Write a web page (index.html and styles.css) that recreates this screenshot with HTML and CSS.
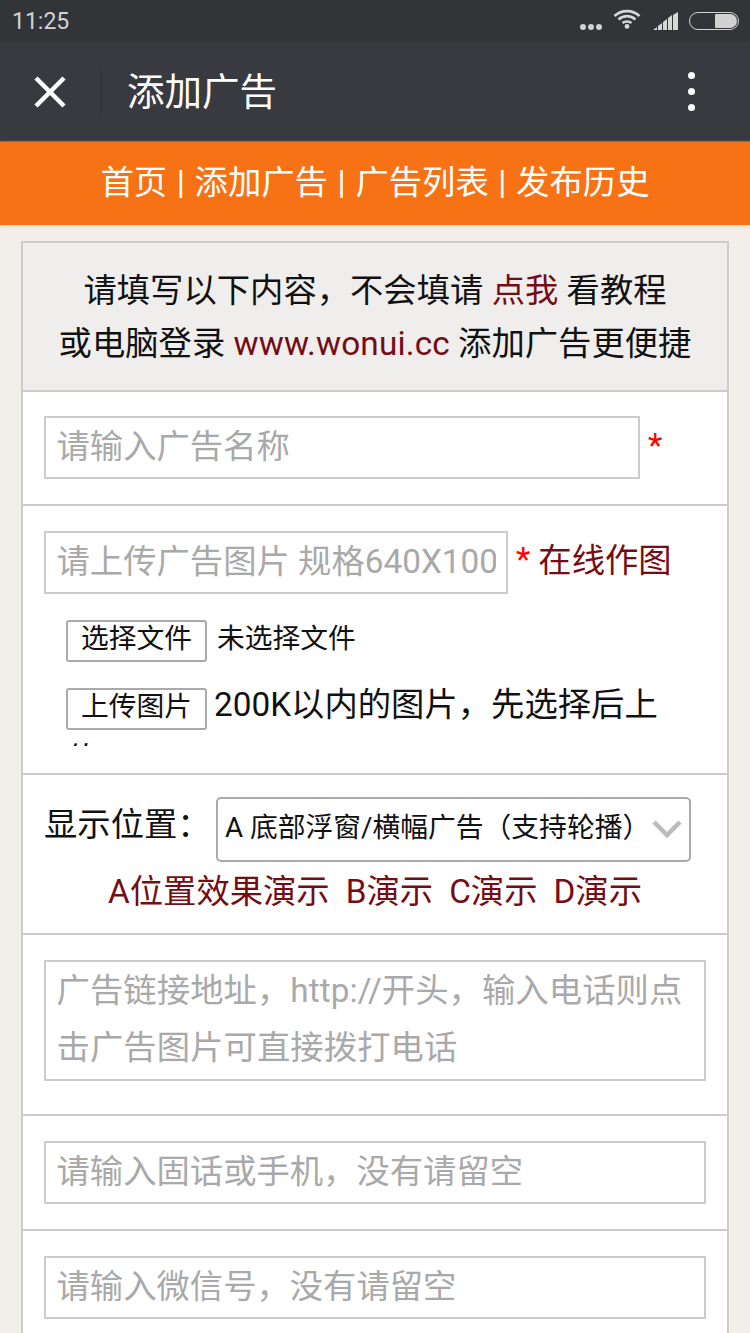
FILE: index.html
```html
<!DOCTYPE html>
<html lang="zh">
<head>
<meta charset="utf-8">
<title>添加广告</title>
<link rel="stylesheet" href="styles.css">
</head>
<body>
<div class="status">
  <span class="time">11:25</span>
  <span class="status-icons">
    <svg class="dots" width="24" height="8" viewBox="0 0 24 8"><circle cx="4" cy="4" r="3"/><circle cx="12" cy="4" r="3"/><circle cx="20" cy="4" r="3"/></svg>
    <svg class="wifi" width="28" height="20" viewBox="0 0 28 20"><path d="M1.500 7C8.500 .5 19.500 .5 26.500 7M5.500 10.500C10.500 6 17.500 6 22.500 10.500M9.500 14C12 12 16 12 18.500 14" fill="none" stroke="#d6d6d6" stroke-width="2.600"/><circle cx="14" cy="17.400" r="2.400" fill="#d6d6d6"/></svg>
    <svg class="signal" width="26" height="18" viewBox="0 0 26 18"><path d="M0 18l4-3v3zM5 18v-4l4-3v7zM10 18V10l4-3v11zM15 18V6l4-3v15zM20 18V3l5-3v18z" fill="#d6d6d6"/></svg>
    <span class="battery"><span class="battery-fill"></span></span>
  </span>
</div>
<header class="bar">
  <svg class="close" width="34" height="34" viewBox="0 0 34 34"><path d="M3 3l28 28M31 3L3 31" stroke="#fff" stroke-width="4.500" fill="none"/></svg>
  <span class="bar-rule"></span>
  <h1 class="bar-title">添加广告</h1>
  <span class="more"><i></i><i></i><i></i></span>
</header>
<nav class="nav">首页 | 添加广告 | 广告列表 | 发布历史</nav>
<main class="card">
  <div class="intro">
    <p>请填写以下内容，不会填请 <a class="link">点我</a> 看教程</p>
    <p>或电脑登录 <a class="link site">www.wonui.cc</a> 添加广告更便捷</p>
  </div>
  <section class="row row-name">
    <input class="field field-name" placeholder="请输入广告名称">
    <span class="star">*</span>
  </section>
  <section class="row row-image">
    <div class="image-line">
      <input class="field field-image" placeholder="请上传广告图片 规格640X100">
      <span class="star">*</span>
      <a class="link online">在线作图</a>
    </div>
    <div class="file-line">
      <button class="btn">选择文件</button><span class="file-none">未选择文件</span>
    </div>
    <div class="upload-line">
      <button class="btn">上传图片</button>200K以内的图片，先选择后上传
    </div>
  </section>
  <section class="row row-pos">
    <div class="pos-line">
      <label class="pos-label">显示位置：</label>
      <span class="select-wrap">
        <select class="select"><option>A 底部浮窗/横幅广告（支持轮播）</option></select>
        <svg class="chev" width="30" height="20" viewBox="0 0 30 20"><path d="M2 3l13 13L28 3" fill="none" stroke="#bbb" stroke-width="4.500"/></svg>
      </span>
    </div>
    <div class="demos"><a class="link">A位置效果演示</a><a class="link">B演示</a><a class="link">C演示</a><a class="link">D演示</a></div>
  </section>
  <section class="row row-url">
    <textarea class="field area" placeholder="广告链接地址，http://开头，输入电话则点击广告图片可直接拨打电话"></textarea>
  </section>
  <section class="row">
    <input class="field field-wide" placeholder="请输入固话或手机，没有请留空">
  </section>
  <section class="row">
    <input class="field field-wide" placeholder="请输入微信号，没有请留空">
  </section>
</main>
</body>
</html>
```
FILE: styles.css
```css
* { box-sizing: border-box; }
html, body { margin: 0; padding: 0; height: 1333px; overflow: hidden; }
body {
  background: #f2eee8;
  font-family: Roboto, "Noto Sans CJK SC", sans-serif;
  font-size: 33.33px;
  color: #111;
}
.status {
  height: 42px;
  background: #333438;
  display: flex;
  align-items: center;
  justify-content: space-between;
  padding: 0 11px 0 12px;
  color: #d2d2d2;
}
.time { font-size: 23px; }
.status-icons { display: flex; align-items: center; }
.dots { fill: #d2d2d2; margin: 12px 10px 0 0; }
.wifi { margin: -4px 12px 0 0; }
.signal { margin: 0 10px 0 0; }
.battery {
  width: 50px;
  height: 18px;
  border: 1.5px solid #d2d2d2;
  border-radius: 9px;
  display: flex;
  justify-content: flex-end;
  padding: 1px;
}
.battery-fill { width: 22px; background: #d2d2d2; border-radius: 1px 7px 7px 1px; }
.bar {
  height: 99px;
  background: #393a3f;
  display: flex;
  align-items: center;
  padding: 0 0 0 33px;
  color: #fff;
}
.bar-rule { width: 1px; height: 50px; background: #2f3034; margin: 0 26px 0 33px; }
.bar-title { margin: 0; font-size: 37.5px; font-weight: 400; flex: 1; line-height: 1; padding-top: 2px; }
.more { display: flex; flex-direction: column; gap: 9px; margin-right: 55px; }
.more i { width: 7px; height: 7px; border-radius: 50%; background: #fff; }
.nav {
  height: 84px;
  background: #f77214;
  border-top: 1px solid #c9561a;
  color: #fff;
  font-size: 33.33px;
  word-spacing: 1.4px;
  display: flex;
  align-items: center;
  justify-content: center;
  box-shadow: 0 2px 3px #ddd;
  padding-bottom: 8px;
}
.card {
  margin: 16px 21px 0;
  border: 2px solid #ccc;
  background: #fff;
  height: 1200px;
}
.link { color: #760c14; }
.site { letter-spacing: .15px; }
.intro {
  height: 149px;
  background: #efeeec;
  border-bottom: 2px solid #ccc;
  text-align: center;
  padding-top: 21px;
  line-height: 53px;
}
.intro p { margin: 0; }
.row {
  border-bottom: 2px solid #ccc;
  padding: 25px 21px 24px;
  height: 115px;
}
.row-name { display: flex; align-items: flex-start; height: 114px; padding-top: 24px; }
.row-name .star { line-height: 60px; }
.field {
  display: block;
  height: 63px;
  border: 2px solid #ccc;
  background: #fff;
  padding: 0 10.5px 2px;
  font: inherit;
  font-size: 33.33px;
  color: #111;
  outline: 0;
  border-radius: 0;
}
.field::placeholder { color: #a9a9a9; opacity: 1; }
.field-name { width: 596px; }
.star { color: #f00; margin-left: 8px; line-height: 58px; }
.row-image { height: 269px; }
.image-line { display: flex; align-items: flex-start; height: 63px; }
.field-image { width: 464px; }
.online { margin-left: 8px; line-height: 60px; }
.file-line { display: flex; align-items: center; height: 42px; margin: 26px 0 0 22px; font-size: 27.77px; }
.file-none { padding-bottom: 11px; }
.upload-line { width: 610px; margin: 15px 0 0 22px; line-height: 55px; height: 69px; overflow: hidden; }
.btn {
  width: 141px;
  height: 42px;
  padding: 0 0 6px;
  border: 2px solid #aaa;
  border-radius: 3px;
  background: #fff;
  font: inherit;
  font-size: 27.77px;
  line-height: 34px;
  color: #111;
  margin-right: 7px;
}
.file-line .btn { margin-right: 10px; padding-bottom: 8px; }
.row-pos { height: 160px; padding-top: 22px; }
.pos-line { display: flex; align-items: flex-start; }
.pos-label { width: 172px; line-height: 56px; }
.select-wrap { position: relative; display: block; width: 475px; height: 65px; }
.select {
  appearance: none;
  width: 100%;
  height: 100%;
  border: 2px solid #aaa;
  border-radius: 5px;
  background: #fff;
  font: inherit;
  font-size: 27.77px;
  color: #111;
  padding: 0 0 4px 7px;
}
.chev { position: absolute; right: 9px; top: 22px; }
.demos { display: flex; justify-content: center; gap: 16px; margin-top: 6px; line-height: 48px; }
.row-url { height: 181px; }
.area {
  width: 662px;
  height: 121px;
  line-height: 57px;
  padding: 0 10.5px;
  letter-spacing: .08px;
  resize: none;
  overflow: hidden;
}
.field-wide { width: 662px; }
.row:last-child { border-bottom: 0; }
```
